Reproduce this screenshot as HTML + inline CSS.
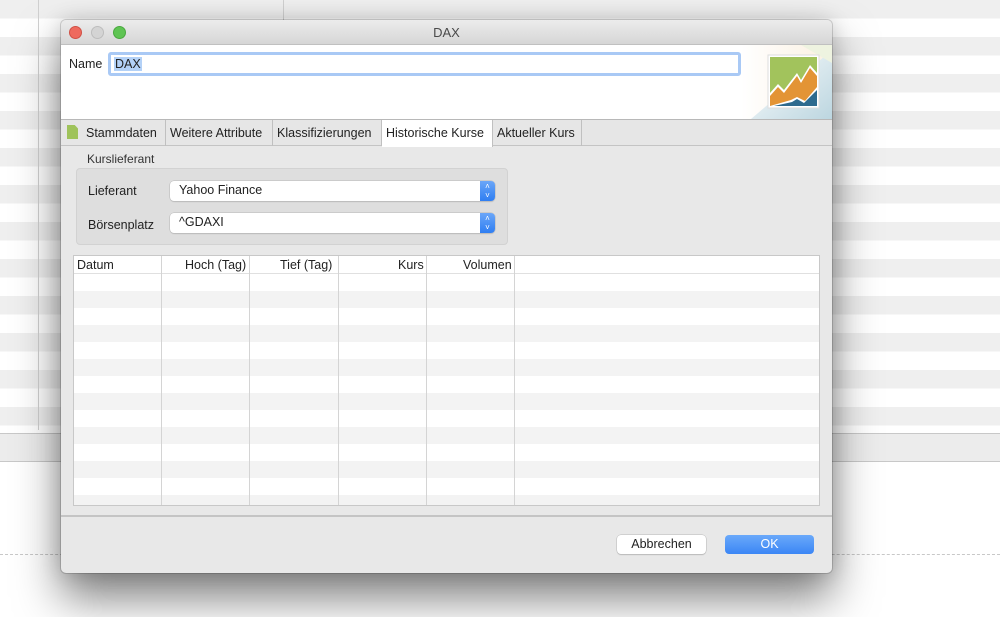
<!DOCTYPE html>
<html><head><meta charset="utf-8"><style>
*{box-sizing:border-box;margin:0;padding:0}
body{width:1000px;height:617px;overflow:hidden;position:relative;font-family:"Liberation Sans",sans-serif;font-size:12px;color:#222;background:#fff}
.bgtop{position:absolute;left:0;top:0;width:1000px;height:434px;background:repeating-linear-gradient(#efefef 0 18.5px,#fff 18.5px 37px)}
.vl{position:absolute;top:0;width:1px;background:#d0d0d0}
.abs{position:absolute}
.dlg{position:absolute;left:61px;top:20px;width:771px;height:553px;background:#e8e8e8;border-radius:5px;box-shadow:0 25px 45px rgba(0,0,0,.5),0 0 20px rgba(0,0,0,.15),0 0 0 1px rgba(0,0,0,.15);overflow:hidden}
.title{position:absolute;left:0;top:0;width:771px;height:25px;background:linear-gradient(#ececec,#d6d6d6);border-bottom:1px solid #c0c0c0;text-align:center;line-height:25px;font-size:13px;color:#4a4a4a}
.dot{position:absolute;top:6px;width:13px;height:13px;border-radius:50%}
.top{position:absolute;left:0;top:25px;width:771px;height:74px;background:#fff}
.tabs{position:absolute;left:0;top:99px;width:771px;height:27px;background:#e6e6e6;border-top:1px solid #b8b8b8;border-bottom:1px solid #c4c4c4}
.tab{position:absolute;top:0;height:26px;line-height:26px;border-right:1px solid #c0c0c0;font-size:12.5px;padding-left:4px;color:#222}
.combo{position:absolute;left:109px;width:325px;height:20px;background:#fff;border-radius:4px;box-shadow:0 0 0 .5px #b8b8b8,0 1px 1px rgba(0,0,0,.15);padding-left:9px;line-height:19px;font-size:12.5px}
.cb{position:absolute;right:0;top:0;width:15px;height:20px;background:linear-gradient(#6aa6f8,#2f7ef2);border-radius:0 4px 4px 0;color:#fff;font-size:8px;text-align:center;line-height:9px;padding-top:1px}
.tbl{position:absolute;left:12px;top:235px;width:747px;height:251px;border:1px solid #c8c8c8;background:repeating-linear-gradient(#fff 0 17px,#f3f3f3 17px 34px);background-position:0 18px;overflow:hidden}
.th{position:absolute;top:0;left:0;width:745px;height:18px;background:#fff;border-bottom:1px solid #e0e0e0}
.col{position:absolute;top:0;height:251px;width:1px;background:#d4d4d4}
.h{position:absolute;top:2px;font-size:12.5px}
.btn{position:absolute;top:515px;width:89px;height:19px;border-radius:4px;text-align:center;line-height:19px;font-size:12.5px}
</style></head><body>
<div class="bgtop"></div>
<div class="vl" style="left:38px;height:430px"></div>
<div class="vl" style="left:283px;height:20px"></div>
<div class="abs" style="left:0;top:433px;width:1000px;height:1px;background:#c8c8c8"></div>
<div class="abs" style="left:0;top:434px;width:1000px;height:27px;background:#ececec"></div>
<div class="abs" style="left:0;top:461px;width:1000px;height:1px;background:#c8c8c8"></div>
<div class="abs" style="left:0;top:554px;width:1000px;border-top:1px dashed #c8c8c8"></div>

<div class="dlg">
 <div class="title">DAX
  <div class="dot" style="left:8px;background:#ee6a5e;border:.5px solid #d05045"></div>
  <div class="dot" style="left:30px;background:#d4d4d4;border:.5px solid #bdbdbd"></div>
  <div class="dot" style="left:52px;background:#5fc453;border:.5px solid #4aa83f"></div>
 </div>
 <div class="top">
  <div class="abs" style="left:8px;top:12px;font-size:12.5px">Name</div>
  <div class="abs" style="left:47px;top:7px;width:633px;height:24px;border:3px solid #a9c9f5;border-radius:3px;background:#fff"></div>
  <div class="abs" style="left:53px;top:12px;font-size:12.5px;background:#b3d1f7;padding:0 1px">DAX</div>
  <svg class="abs" style="left:680px;top:0" width="91" height="74">
   <defs><linearGradient id="g" x1="0" y1="0" x2="1" y2="1"><stop offset="0" stop-color="#fff"/><stop offset="1" stop-color="#bcd6e0"/></linearGradient>
   <linearGradient id="g2" x1="0" y1="0" x2="1" y2="0"><stop offset="0" stop-color="#fff"/><stop offset="1" stop-color="#f7e6cc"/></linearGradient></defs>
   <rect x="0" y="0" width="91" height="74" fill="url(#g2)" opacity=".6"/>
   <polygon points="10,74 91,5 91,74" fill="url(#g)"/>
   <polygon points="60,0 91,0 91,18" fill="#eef3e0"/>
   <rect x="27" y="10" width="51" height="53" fill="#fff" stroke="#ddd"/>
   <rect x="29" y="12" width="47" height="49" fill="#a2c35c"/>
   <polygon points="29,48 37,39 43,45 56,28 60,35 69,20 76,28 76,61 29,61" fill="#fff"/>
   <polygon points="29,51 37,42 43,48 56,31 60,38 69,23 76,31 76,61 29,61" fill="#e39435"/>
   <polygon points="29,61 50,55 56,52 64,56 76,42 76,61" fill="#fff"/>
   <polygon points="33,61 51,57 56,54 63,58 76,45 76,61" fill="#2e6a8e"/>
  </svg>
 </div>
 <div class="tabs">
  <div class="tab" style="left:0;width:105px;padding-left:6px"><span style="display:inline-block;width:11px;height:14px;background:#9fc35b;vertical-align:-2px;margin-right:8px;clip-path:polygon(0 0,70% 0,100% 25%,100% 100%,0 100%)"></span>Stammdaten</div>
  <div class="tab" style="left:105px;width:107px">Weitere Attribute</div>
  <div class="tab" style="left:212px;width:109px">Klassifizierungen</div>
  <div class="tab" style="left:321px;width:111px;background:#fff;height:27px">Historische Kurse</div>
  <div class="tab" style="left:432px;width:89px">Aktueller Kurs</div>
 </div>
 <div class="abs" style="left:0;top:126px;width:771px;height:371px;border-bottom:2px solid #c4c4c4"></div>
 <div class="abs" style="left:26px;top:132px;font-size:12px;color:#333">Kurslieferant</div>
 <div class="abs" style="left:15px;top:148px;width:432px;height:77px;background:#dedede;border-radius:4px;border:1px solid #d2d2d2"></div>
 <div class="abs" style="left:27px;top:164px;font-size:12.5px">Lieferant</div>
 <div class="abs" style="left:27px;top:198px;font-size:12.5px">Börsenplatz</div>
 <div class="combo" style="top:161px">Yahoo Finance<div class="cb">&#x2C4;<br>&#x2C5;</div></div>
 <div class="combo" style="top:193px">^GDAXI<div class="cb">&#x2C4;<br>&#x2C5;</div></div>
 <div class="tbl">
  <div class="th"></div>
  <div class="col" style="left:87px"></div><div class="col" style="left:175px"></div><div class="col" style="left:264px"></div><div class="col" style="left:352px"></div><div class="col" style="left:440px"></div>
  <div class="h" style="left:3px">Datum</div>
  <div class="h" style="left:111px">Hoch (Tag)</div>
  <div class="h" style="left:206px">Tief (Tag)</div>
  <div class="h" style="left:324px">Kurs</div>
  <div class="h" style="left:389px">Volumen</div>
 </div>
 <div class="btn" style="left:556px;background:#fff;box-shadow:0 0 0 .5px #b8b8b8,0 1px 1px rgba(0,0,0,.2)">Abbrechen</div>
 <div class="btn" style="left:664px;background:linear-gradient(#6aa9fa,#3b86f5);color:#fff">OK</div>
</div>
</body></html>
